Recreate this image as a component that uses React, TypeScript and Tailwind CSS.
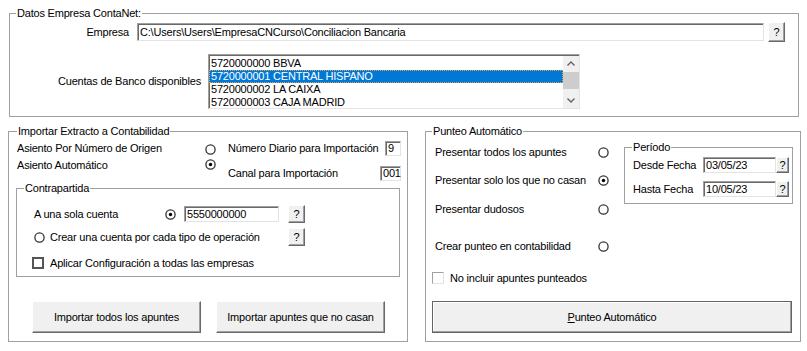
import { FC, ReactNode } from "react";

// sunken edit box, raised button, win classic look
const sunken =
  "border border-t-[#a0a0a0] border-l-[#a0a0a0] border-r-[#e3e3e3] border-b-[#e3e3e3] shadow-[inset_1px_1px_0_#696969] bg-white";
const raised =
  "border border-t-white border-l-white border-r-[#696969] border-b-[#696969] shadow-[inset_-1px_-1px_0_#a0a0a0] bg-[#f0f0f0]";

const Radio: FC<{ checked?: boolean }> = ({ checked }) => (
  <svg width="11" height="11" viewBox="0 0 11 11" className="shrink-0">
    <circle cx="5.5" cy="5.5" r="4.6" fill="#fff" stroke="#333" strokeWidth="1.3" />
    {checked && <circle cx="5.5" cy="5.5" r="1.7" fill="#000" />}
  </svg>
);

const HelpBtn: FC<{ className?: string }> = ({ className }) => (
  <div className={`${raised} ${className} flex items-center justify-center shrink-0 leading-none`}>?</div>
);

const Group: FC<{ title: string; className?: string; legendClass?: string; children: ReactNode }> = ({
  title,
  className,
  legendClass = "ml-[6px]",
  children,
}) => (
  <fieldset className={`border border-[#a0a0a0] min-w-0 ${className}`}>
    <legend className={`px-[1px] leading-[13px] ${legendClass}`}>{title}</legend>
    {children}
  </fieldset>
);

const cuentas = [
  "5720000000 BBVA",
  "5720000001 CENTRAL HISPANO",
  "5720000002 LA CAIXA",
  "5720000003 CAJA MADRID",
];

const App: FC = () => {
  return (
    <div className="w-[807px] h-[351px] bg-white overflow-hidden text-black text-[11px] leading-[13px] tracking-[-0.2px] font-['Liberation_Sans',Arial,sans-serif]">
      {/* Datos Empresa */}
      <Group title="Datos Empresa ContaNet:" className="mt-[7px] ml-[9px] w-[790px] pb-[7px]">
        <div className="flex items-center h-[20px] mt-[2px]">
          <div className="w-[119px] text-right">Empresa</div>
          <div className={`${sunken} ml-[8px] w-[627px] h-[18px] flex items-center pl-[2px]`}>
            C:\Users\Users\EmpresaCNCurso\Conciliacion Bancaria
          </div>
          <HelpBtn className="ml-[4px] w-[17px] h-[20px]" />
        </div>
        <div className="flex items-center mt-[12px]">
          <div className="w-[191px] text-right">Cuentas de Banco disponibles</div>
          <div className={`${sunken} ml-[7px] w-[372px] h-[55px] flex pt-[1px]`}>
            <div className="flex-1 flex flex-col pt-[1px]">
              {cuentas.map((c, i) => (
                <div
                  key={c}
                  className={
                    i === 1
                      ? "h-[13px] bg-[#0078d7] text-white border border-dotted border-[#e8a33c] pl-[1px] leading-[11px]"
                      : "h-[13px] pl-[2px]"
                  }
                >
                  {c}
                </div>
              ))}
            </div>
            <div className="w-[16px] bg-[#f0f0f0] flex flex-col items-center">
              <svg width="16" height="16" viewBox="0 0 16 16">
                <polyline points="4.5,9.5 8,6 11.5,9.5" fill="none" stroke="#606060" strokeWidth="1.3" />
              </svg>
              <div className="w-[16px] h-[17px] bg-[#cdcdcd]" />
              <div className="flex-1" />
              <svg width="16" height="16" viewBox="0 0 16 16">
                <polyline points="4.5,6.5 8,10 11.5,6.5" fill="none" stroke="#606060" strokeWidth="1.3" />
              </svg>
            </div>
          </div>
        </div>
      </Group>

      <div className="flex mt-[8px]">
        {/* Importar Extracto */}
        <Group title="Importar Extracto a Contabilidad" className="ml-[8px] w-[400px] h-[217px] pb-[8px]" legendClass="ml-[8px]">
          <div className="flex items-center h-[14px] mt-[3px]">
            <div className="ml-[8px] w-[188px]">Asiento Por Número de Origen</div>
            <div className="mt-[3px]">
              <Radio />
            </div>
            <div className="ml-[12px] flex-1">Número Diario para Importación</div>
            <div className={`${sunken} w-[16px] h-[15px] mr-[6px] pl-[2px] leading-[13px]`}>9</div>
          </div>
          <div className="flex h-[25px] mt-[2px]">
            <div className="ml-[8px] w-[188px] mt-[2px]">Asiento Automático</div>
            <div className="mt-[2px]">
              <Radio checked />
            </div>
            <div className="ml-[12px] flex-1 mt-[10px]">Canal para Importación</div>
            <div className={`${sunken} w-[21px] h-[15px] mt-[9px] mr-[6px] pl-[2px] leading-[13px]`}>001</div>
          </div>

          <Group title="Contrapartida" className="ml-[7px] w-[384px] pb-[7px]" legendClass="ml-[7px]">
            <div className="flex items-center h-[18px] mt-[10px]">
              <div className="ml-[17px] w-[131px]">A una sola cuenta</div>
              <Radio checked />
              <div className={`${sunken} ml-[8px] w-[95px] h-[16px] pl-[2px] leading-[14px]`}>5550000000</div>
              <HelpBtn className="ml-[9px] w-[17px] h-[18px]" />
            </div>
            <div className="flex items-center h-[18px] mt-[5px]">
              <div className="ml-[17px]">
                <Radio />
              </div>
              <div className="ml-[5px] w-[238px]">Crear una cuenta por cada tipo de operación</div>
              <HelpBtn className="w-[17px] h-[18px]" />
            </div>
            <div className="flex items-center h-[12px] mt-[11px]">
              <div className="ml-[15px] w-[12px] h-[12px] border-2 border-[#555] bg-white" />
              <div className="ml-[6px]">Aplicar Configuración a todas las empresas</div>
            </div>
          </Group>

          <div className="flex gap-[15px] ml-[23px] mt-[24px]">
            <div className={`${raised} w-[169px] h-[32px] flex items-center justify-center`}>
              Importar todos los apuntes
            </div>
            <div className={`${raised} w-[169px] h-[32px] flex items-center justify-center`}>
              Importar apuntes que no casan
            </div>
          </div>
        </Group>

        {/* Punteo Automatico */}
        <Group title="Punteo Automático" className="ml-[17px] w-[376px] h-[217px] pb-[8px]">
          <div className="flex">
            <div className="w-[184px] flex flex-col">
              <div className="flex items-center h-[14px] mt-[7px]">
                <div className="pl-[9px] flex-1">Presentar todos los apuntes</div>
                <Radio />
                <div className="w-[1px]" />
              </div>
              <div className="flex items-center h-[14px] mt-[14px]">
                <div className="pl-[9px] flex-1">Presentar solo los que no casan</div>
                <Radio checked />
                <div className="w-[1px]" />
              </div>
              <div className="flex items-center h-[14px] mt-[15px]">
                <div className="pl-[9px] flex-1">Presentar dudosos</div>
                <Radio />
                <div className="w-[1px]" />
              </div>
              <div className="flex items-center h-[14px] mt-[23px]">
                <div className="pl-[9px] flex-1">Crear punteo en contabilidad</div>
                <Radio />
                <div className="w-[1px]" />
              </div>
            </div>

            <Group title="Período" className="ml-[14px] mt-[3px] w-[169px] h-[63px] pb-[6px]" legendClass="ml-[7px]">
              <div className="flex items-center h-[16px] mt-[3px]">
                <div className="ml-[8px] w-[70px]">Desde Fecha</div>
                <div className={`${sunken} w-[73px] h-[16px] pl-[2px] leading-[14px]`}>03/05/23</div>
                <HelpBtn className="w-[13px] h-[16px]" />
              </div>
              <div className="flex items-center h-[16px] mt-[8px]">
                <div className="ml-[8px] w-[70px]">Hasta Fecha</div>
                <div className={`${sunken} w-[73px] h-[16px] pl-[2px] leading-[14px]`}>10/05/23</div>
                <HelpBtn className="w-[13px] h-[16px]" />
              </div>
            </Group>
          </div>

          <div className="flex items-center h-[12px] mt-[19px]">
            <div className="ml-[6px] w-[12px] h-[12px] border border-t-[#a0a0a0] border-l-[#a0a0a0] border-r-[#e3e3e3] border-b-[#e3e3e3] bg-white" />
            <div className="ml-[6px]">No incluir apuntes punteados</div>
          </div>

          <div className="ml-[6px] mt-[17px] w-[360px] h-[32px] border border-[#646464] shadow-[inset_-1px_-1px_0_#a0a0a0,inset_1px_1px_0_#fff] bg-[#f0f0f0] flex items-center justify-center">
            <span>
              <span className="underline">P</span>unteo Automático
            </span>
          </div>
        </Group>
      </div>
    </div>
  );
};

export default App;
